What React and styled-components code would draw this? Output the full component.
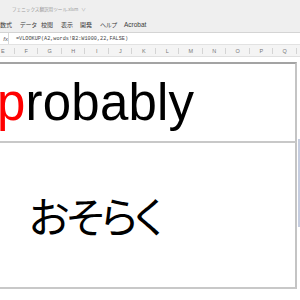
import React from "react";
import styled, { createGlobalStyle } from "styled-components";

const Global = createGlobalStyle`
  html, body { margin: 0; padding: 0; background: #ffffff; }
  body { width: 300px; height: 300px; overflow: hidden; font-family: "Liberation Sans", "Noto Sans CJK JP", sans-serif; }
`;

const Page = styled.div`
  width: 300px;
  height: 300px;
  display: flex;
  flex-direction: column;
  overflow: hidden;
`;

const Ribbon = styled.div`
  height: 32px;
  background: #efefef;
  border-bottom: 1px solid #d4d4d4;
  display: flex;
  flex-direction: column;
`;

const TitleRow = styled.div`
  height: 17px;
  display: flex;
  align-items: center;
  padding-left: 12px;
  font-size: 4.6px;
  color: #9a9a9a;
  font-family: "Noto Sans CJK JP", sans-serif;
  gap: 3px;
`;

const MenuRow = styled.div`
  display: grid;
  grid-template-columns: 20px 21px 20px 19px 20px 24px auto;
  align-items: center;
  height: 15px;
  font-size: 6px;
  color: #3a3a3a;
  font-family: "Noto Sans CJK JP", sans-serif;
  font-feature-settings: "palt";
`;

const MenuItem = styled.span`
  white-space: nowrap;
  font-size: ${(p) => (p.$latin ? "6.5px" : "6px")};
  font-family: ${(p) => (p.$latin ? '"Liberation Sans", sans-serif' : '"Noto Sans CJK JP", sans-serif')};
`;

const FormulaBar = styled.div`
  height: 11px;
  background: #ffffff;
  display: flex;
  align-items: center;
  border-bottom: 1px solid #e2e2e2;
`;

const FxBox = styled.div`
  width: 8px;
  height: 100%;
  border-right: 1px solid #d8d8d8;
  display: flex;
  align-items: center;
  justify-content: flex-end;
  font-size: 6px;
  font-style: italic;
  color: #555;
  overflow: hidden;
`;

const Formula = styled.div`
  padding-left: 7px;
  font-family: "Liberation Mono", monospace;
  font-size: 5.2px;
  color: #444;
  white-space: nowrap;
`;

const HeaderRow = styled.div`
  height: 11px;
  background: #f4f4f4;
  display: flex;
  margin-left: -9px;
  border-bottom: 1px solid #e0e0e0;
`;

const HeaderCell = styled.div`
  flex: 0 0 23.5px;
  height: 100%;
  display: flex;
  align-items: center;
  justify-content: center;
  font-size: 5.5px;
  color: #777;
  position: relative;
  &::after {
    content: "";
    position: absolute;
    right: 0;
    top: 3px;
    bottom: 2px;
    width: 1px;
    background: #d4d4d4;
  }
`;

const Spacer = styled.div`
  height: 5px;
`;

const Sheet = styled.div`
  display: flex;
  flex: 1;
`;

const Cells = styled.div`
  width: 297px;
  display: flex;
  flex-direction: column;
`;

const Cell = styled.div`
  box-sizing: border-box;
  height: ${(p) => p.$h}px;
  border-top: ${(p) => (p.$top ? "2px solid #a3a3a3" : "none")};
  border-right: 2px solid #c4c4c4;
  border-bottom: 2px solid #c8c8c8;
  display: flex;
  align-items: ${(p) => p.$align};
  padding-left: ${(p) => p.$pl}px;
  padding-bottom: ${(p) => p.$pb}px;
`;

const English = styled.div`
  font-family: "Liberation Sans", sans-serif;
  font-size: 51px;
  line-height: 51px;
  margin-left: -3px;
  color: #000;
  white-space: nowrap;
  letter-spacing: 0.2px;
`;

const Red = styled.span`
  color: #ff0000;
`;

const Japanese = styled.div`
  font-family: "Noto Sans CJK JP", sans-serif;
  font-size: 42px;
  line-height: 1;
  font-feature-settings: "palt";
  letter-spacing: -3px;
  color: #000;
  white-space: nowrap;
`;

const Gutter = styled.div`
  width: 3px;
  display: flex;
  flex-direction: column;
  padding-top: 77px;
`;

const ScrollThumb = styled.div`
  width: 2px;
  margin-left: 1px;
  height: 88px;
  background: #c5cde0;
`;

const columns = ["E", "F", "G", "H", "I", "J", "K", "L", "M", "N", "O", "P", "Q"];
const menus = ["数式", "データ", "校閲", "表示", "開発", "ヘルプ", "Acrobat"];

export default function App() {
  return (
    <>
      <Global />
      <Page>
        <Ribbon>
          <TitleRow>
            <span>フェニックス翻訳用ツール.xlsm</span>
            <span>∨</span>
          </TitleRow>
          <MenuRow>
            {menus.map((m) => (
              <MenuItem key={m} $latin={m === "Acrobat"}>
                {m}
              </MenuItem>
            ))}
          </MenuRow>
        </Ribbon>
        <FormulaBar>
          <FxBox>fx</FxBox>
          <Formula>=VLOOKUP(A2,words!B2:W1000,22,FALSE)</Formula>
        </FormulaBar>
        <HeaderRow>
          {columns.map((c) => (
            <HeaderCell key={c}>{c}</HeaderCell>
          ))}
        </HeaderRow>
        <Spacer />
        <Sheet>
          <Cells>
            <Cell $h={81} $top $align="flex-end" $pl={0} $pb={13}>
              <English>
                <Red>p</Red>robably
              </English>
            </Cell>
            <Cell $h={146} $align="center" $pl={29} $pb={0}>
              <Japanese>おそらく</Japanese>
            </Cell>
          </Cells>
          <Gutter>
            <ScrollThumb />
          </Gutter>
        </Sheet>
      </Page>
    </>
  );
}
